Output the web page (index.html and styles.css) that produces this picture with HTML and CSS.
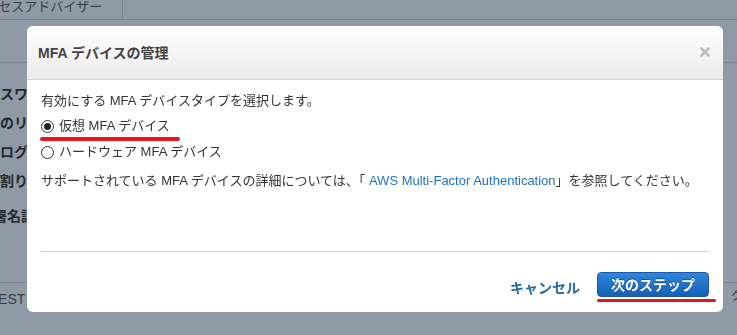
FILE: index.html
```html
<!DOCTYPE html>
<html lang="ja">
<head>
    <meta charset="UTF-8">
    <meta name="viewport" content="width=device-width, initial-scale=1.0">
    <title>MFA デバイスの管理</title>
    <link rel="stylesheet" href="styles.css">
</head>
<body>
    <!-- page behind the dialog -->
    <div class="page">
        <div class="tab-bar">
            <div class="tab">アクセスアドバイザー</div>
        </div>
        <div class="sub-bar"></div>
        <ul class="settings">
            <li class="cut-1">パスワード</li>
            <li>のリスト</li>
            <li>ログイン</li>
            <li>割り当て</li>
            <li class="cut-half tall">署名証明書</li>
        </ul>
        <div class="page-foot">
            <span class="foot-left">REST</span>
            <span class="foot-right">グラフ</span>
        </div>
    </div>

    <div class="overlay">
        <div class="modal">
            <div class="modal-header">
                <div class="modal-title">MFA デバイスの管理</div>
                <div class="close">
                    <svg viewBox="0 0 10 10" width="10" height="10">
                        <line x1="1.5" y1="1.5" x2="8.5" y2="8.5" stroke="#bdbdbd" stroke-width="2.6" stroke-linecap="round"/>
                        <line x1="8.5" y1="1.5" x2="1.5" y2="8.5" stroke="#bdbdbd" stroke-width="2.6" stroke-linecap="round"/>
                    </svg>
                </div>
            </div>
            <div class="modal-body">
                <p class="lead">有効にする MFA デバイスタイプを選択します。</p>
                <label class="option marked"><span class="radio checked"></span>仮想 MFA デバイス</label>
                <label class="option"><span class="radio"></span>ハードウェア MFA デバイス</label>
                <p class="note">サポートされている MFA デバイスの詳細については、「 <a href="#">AWS Multi-Factor Authentication</a>」を参照してください。</p>
            </div>
            <div class="modal-footer">
                <a class="cancel" href="#">キャンセル</a>
                <button class="next">次のステップ</button>
            </div>
        </div>
    </div>
</body>
</html>
```
FILE: styles.css
```css
html, body {
    margin: 0;
    padding: 0;
    height: 100%;
    overflow: hidden;
}
body {
    background-color: #8f9aa6;
    font-family: "Liberation Sans", "Noto Sans CJK JP", sans-serif;
    color: #2f3439;
}

/* background page (already dimmed) */
.page {
    width: 100%;
}
.tab-bar {
    height: 19px;
    border-bottom: 1px solid #7b8591;
    display: flex;
}
.tab {
    width: 122px;
    border-right: 1px solid #7b8591;
    font-size: 13px;
    line-height: 14px;
    text-indent: -27px;
    white-space: nowrap;
    overflow: hidden;
    color: #3a3f45;
}
.sub-bar {
    height: 42px;
    border-bottom: 1px solid #7b8591;
}
.settings {
    list-style-type: none;
    margin: 0;
    padding: 22px 0 0 0;
    height: 219px;
    width: 27px;
    overflow: hidden;
    box-sizing: border-box;
}
.settings li {
    font-size: 14px;
    font-weight: bold;
    line-height: 18px;
    height: 29px;
    white-space: nowrap;
    color: #24282c;
}
.settings li.tall {
    margin-top: 6px;
}
.cut-1 {
    text-indent: -14px;
}
.cut-half {
    text-indent: -7px;
}
.page-foot {
    border-top: 1px solid #7b8591;
    display: flex;
    justify-content: space-between;
    font-size: 14px;
    color: #3a3f45;
    height: 40px;
}
.foot-left {
    margin-left: -12px;
    margin-top: 8px;
}
.foot-right {
    margin-right: -30px;
    margin-top: 3px;
    font-size: 12px;
}

/* dialog */
.overlay {
    position: fixed;
    top: 0;
    left: 0;
    right: 0;
    bottom: 0;
    padding: 26px 0 0 27px;
}
.modal {
    width: 696px;
    height: 286px;
    background-color: #fff;
    border-radius: 6px;
    overflow: hidden;
    display: flex;
    flex-direction: column;
}
.modal-header {
    height: 53px;
    flex-shrink: 0;
    border-bottom: 1px solid #d6d6d6;
    background: linear-gradient(to bottom, #ffffff, #ebebeb);
    display: flex;
    align-items: center;
    justify-content: space-between;
    padding: 0 13px 0 11px;
}
.modal-title {
    font-size: 14px;
    font-weight: bold;
    color: #444;
    line-height: 18px;
}
.close {
    width: 10px;
    height: 10px;
    display: flex;
    margin-top: -1px;
}
.modal-body {
    height: 172px;
    flex-shrink: 0;
    margin: 0 14px;
    padding-top: 12px;
    box-sizing: border-box;
    border-bottom: 1px solid #cfcfcf;
    font-size: 13px;
    line-height: 18px;
    color: #333;
}
.modal-body p {
    margin: 0;
}
.option {
    display: flex;
    align-items: center;
    width: max-content;
    position: relative;
}
.lead + .option {
    margin-top: 7px;
}
.option + .option {
    margin-top: 8px;
}
.option.marked::after {
    content: "";
    position: absolute;
    left: -1px;
    right: -10px;
    bottom: -6px;
    height: 4px;
    border-radius: 2px;
    background-color: #e5141d;
}
.radio {
    width: 11px;
    height: 11px;
    border: 1px solid #333;
    border-radius: 50%;
    margin-right: 5px;
    display: flex;
    align-items: center;
    justify-content: center;
    background-color: #fff;
}
.radio.checked::before {
    content: "";
    width: 7px;
    height: 7px;
    border-radius: 50%;
    background-color: #222;
}
.note {
    margin-top: 11px !important;
}
.note a {
    color: #1a73c8;
    text-decoration: none;
}
.modal-footer {
    display: flex;
    justify-content: flex-end;
    align-items: center;
    padding: 20px 14px 0 0;
}
.cancel {
    font-size: 14px;
    font-weight: bold;
    color: #1b69aa;
    text-decoration: none;
    margin-right: 17px;
    margin-top: 5px;
}
.next {
    position: relative;
    width: 112px;
    height: 25px;
    border: 1px solid #1a5aa6;
    border-radius: 4px;
    background: linear-gradient(to bottom, #2e86dc, #1560b6);
    color: #fff;
    font-family: "Liberation Sans", "Noto Sans CJK JP", sans-serif;
    font-size: 14px;
    font-weight: bold;
    text-shadow: 0 -1px 0 rgba(0,0,0,0.35);
    padding: 0;
    line-height: 20px;
}
.next::after {
    content: "";
    position: absolute;
    left: -1px;
    right: -8px;
    bottom: -6px;
    height: 3px;
    border-radius: 2px;
    background-color: #e5141d;
}
```
